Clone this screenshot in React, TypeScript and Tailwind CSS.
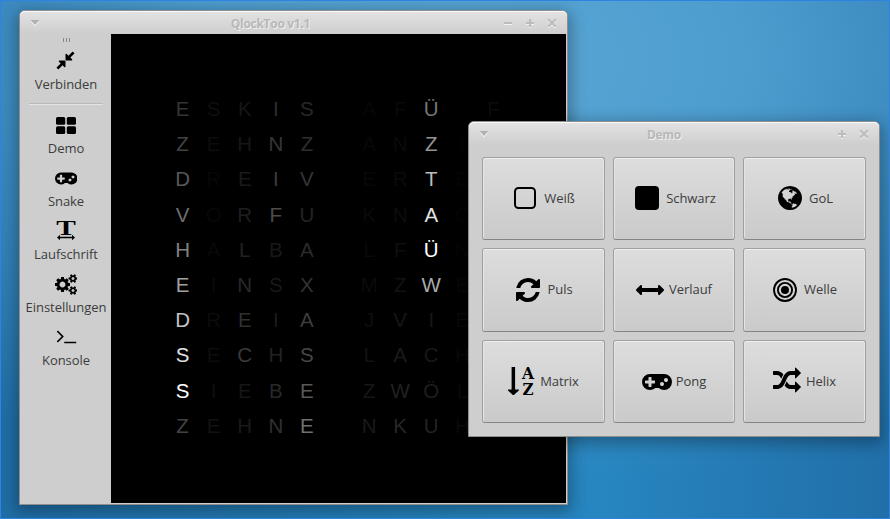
import React from "react";

const paths = {
  compress:
    "M896 960v448q0 26-19 45t-45 19-45-19l-144-144-332 332q-10 10-23 10t-23-10l-114-114q-10-10-10-23t10-23l332-332-144-144q-19-19-19-45t19-45 45-19h448q26 0 45 19t19 45zm755-672q0 13-10 23l-332 332 144 144q19 19 19 45t-19 45-45 19h-448q-26 0-45-19t-19-45v-448q0-26 19-45t45-19 45 19l144 144 332-332q10-10 23-10t23 10l114 114q10 10 10 23z",
  gamepad:
    "M832 1088v-128q0-14-9-23t-23-9h-192v-192q0-14-9-23t-23-9h-128q-14 0-23 9t-9 23v192h-192q-14 0-23 9t-9 23v128q0 14 9 23t23 9h192v192q0 14 9 23t23 9h128q14 0 23-9t9-23v-192h192q14 0 23-9t9-23zm576 64q0-53-37.5-90.5t-90.5-37.5-90.5 37.5-37.5 90.5 37.5 90.5 90.5 37.5 90.5-37.5 37.5-90.5zm256-256q0-53-37.5-90.5t-90.5-37.5-90.5 37.5-37.5 90.5 37.5 90.5 90.5 37.5 90.5-37.5 37.5-90.5zm256 128q0 212-150 362t-362 150q-192 0-338-128h-220q-146 128-338 128-212 0-362-150t-150-362 150-362 362-150h896q212 0 362 150t150 362z",
  refresh:
    "M1639 1056q0 5-1 7-64 268-268 434.5t-478 166.5q-146 0-282.5-55t-243.5-157l-129 129q-19 19-45 19t-45-19-19-45v-448q0-26 19-45t45-19h448q26 0 45 19t19 45-19 45l-137 137q71 66 161 102t187 36q134 0 250-65t186-179q11-17 53-117 8-23 30-23h192q13 0 22.5 9.5t9.5 22.5zm25-800v448q0 26-19 45t-45 19h-448q-26 0-45-19t-19-45 19-45l138-138q-148-137-349-137-134 0-250 65t-186 179q-11 17-53 117-8 23-30 23h-199q-13 0-22.5-9.5t-9.5-22.5v-7q65-268 270-434.5t480-166.5q146 0 284 55.5t245 156.5l130-129q19-19 45-19t45 19 19 45z",
  random:
    "M666 481q-60 92-137 273-22-45-37-72.5t-40.5-63.5-51-56.5-63-35-81.5-14.5h-224q-14 0-23-9t-9-23v-192q0-14 9-23t23-9h224q250 0 410 225zm1126 799q0 14-9 23l-320 320q-9 9-23 9-13 0-22.5-9.5t-9.5-22.5v-192q-32 0-85 .5t-81 1-73-1-71-5-64-10.5-63-18.5-58-28.5-59-40-55-53.5-56-69.5q59-93 136-273 22 45 37 72.5t40.5 63.5 51 56.5 63 35 81.5 14.5h256v-192q0-14 9-23t23-9q12 0 24 10l319 319q9 9 9 23zm0-896q0 14-9 23l-320 320q-9 9-23 9-13 0-22.5-9.5t-9.5-22.5v-192h-256q-48 0-87 15t-69 45-51 61.5-45 77.5q-32 62-78 171-29 66-49.5 111t-54 105-64 100-74 83-90 68.5-106.5 42-128 16.5h-224q-14 0-23-9t-9-23v-192q0-14 9-23t23-9h224q48 0 87-15t69-45 51-61.5 45-77.5q32-62 78-171 29-66 49.5-111t54-105 64-100 74-83 90-68.5 106.5-42 128-16.5h256v-192q0-14 9-23t23-9q12 0 24 10l319 319q9 9 9 23z",
  arrows:
    "M1792 896q0 26-19 45l-256 256q-19 19-45 19t-45-19-19-45v-128h-1024v128q0 26-19 45t-45 19-45-19l-256-256q-19-19-19-45t19-45 256-256q19-19 45-19t45 19 19 45v128h1024v-128q0-26 19-45t45-19 45 19l256 256q19 19 19 45z",
  terminal:
    "M649 983l-466 466q-10 10-23 10t-23-10l-50-50q-10-10-10-23t10-23l393-393-393-393q-10-10-10-23t10-23l50-50q10-10 23-10t23 10l466 466q10 10 10 23t-10 23zm1079 457v64q0 14-9 23t-23 9h-960q-14 0-23-9t-9-23v-64q0-14 9-23t23-9h960q14 0 23 9t9 23z",
  bigCog:
    "M896 896q0-106-75-181t-181-75-181 75-75 181 75 181 181 75 181-75 75-181zm384-91v185q0 10-7 19.5t-16 10.5l-155 24q-11 35-32 76 34 48 90 115 7 11 7 20 0 12-7 19-23 30-82.5 89.5t-78.5 59.5q-11 0-21-7l-115-90q-37 19-77 31-11 108-23 155-7 24-30 24h-186q-11 0-20-7.5t-10-17.5l-23-153q-34-10-75-31l-118 89q-7 7-20 7-11 0-21-8-144-133-144-160 0-9 7-19 10-14 41-53t47-61q-23-44-35-82l-152-24q-10-1-17-9.5t-7-19.5v-185q0-10 7-19.5t16-10.5l155-24q11-35 32-76-34-48-90-115-7-11-7-20 0-12 7-20 22-30 82-89t79-59q11 0 21 7l115 90q34-18 77-32 11-108 23-154 7-24 30-24h186q11 0 20 7.5t10 17.5l23 153q34 10 75 31l118-89q8-7 20-7 11 0 21 8 144 133 144 160 0 8-7 19-12 16-42 54t-45 60q23 48 34 82l152 23q10 2 17 10.5t7 19.5z",
  smallCog:
    "M1664 1408q0-52-38-90t-90-38-90 38-38 90q0 53 37.5 90.5t90.5 37.5 90.5-37.5 37.5-90.5zm256-70v140q0 16-149 31-12 27-30 52 51 113 51 138 0 4-4 7-122 71-124 71-8 0-46-47t-52-68q-20 2-30 2t-30-2q-14 21-52 68t-46 47q-2 0-124-71-4-3-4-7 0-25 51-138-18-25-30-52-149-15-149-31v-140q0-16 149-31 13-29 30-52-51-113-51-138 0-4 4-7 4-2 35-20t59-34 30-16q8 0 46 46.5t52 67.5q20-2 30-2t30 2q51-71 92-112l6-2q4 0 124 70 4 3 4 7 0 25-51 138 17 23 30 52 149 15 149 31z",
  globe:
    "M896 128q209 0 385.5 103t279.5 279.5 103 385.5-103 385.5-279.5 279.5-385.5 103-385.5-103-279.5-279.5-103-385.5 103-385.5 279.5-279.5 385.5-103zm274 521q-2 1-9.5 9.5t-13.5 9.5q2 0 4.5-5t5-11 3.5-7q6-7 22-15 14-6 52-12 34-8 51 11-2-2 9.5-13t14.5-12q3-2 15-4.5t15-7.5l2-22q-12 1-17.5-7t-6.5-21q0 2-6 8 0-7-4.5-8t-11.5 1-9 1q-10-3-15-7.5t-8-16.5-4-15q-2-5-9.5-11t-9.5-10q-1-2-2.5-5.5t-3-6.5-4-5.5-5.5-2.5-7 5-7.5 10-4.5 5q-3-2-6-1.5t-4.5 1-4.5 3-5 3.5q-3 2-8.5 3t-8.5 2q15-5-1-11-10-4-16-3 9-4 7.5-12t-8.5-14h5q-1-4-8.5-8.5t-17.5-8.5-13-6q-8-5-34-9.5t-33-.5q-5 6-4.5 10.5t4 14 3.5 12.5q1 6-5.5 13t-6.5 12q0 7 14 15.5t10 21.5q-3 8-16 16t-16 12q-5 8-1.5 18.5t10.5 16.5q2 2 1.5 4t-3.5 4.5-5.5 4-6.5 3.5l-3 2q-11 5-20.5-6t-13.5-26q-7-25-16-30-23-8-29 1-5-13-41-26-25-9-58-4 6-1 0-15-7-15-19-12 3-6 4-17.5t1-13.5q3-13 12-23 1-1 7-8.5t9.5-13.5.5-6q35 4 50-11 5-5 11.5-17t10.5-17q9-6 14-5.5t14.5 5.5 14.5 5q14 1 15.5-11t-7.5-20q12 1 3-17-4-7-8-9-12-4-27 5-8 4 2 8-1-1-9.5 10.5t-16.5 17.5-16-5q-1-1-5.5-13.5t-9.5-13.5q-8 0-16 15 3-8-11-15t-24-8q19-12-8-27-7-4-20.5-5t-19.5 4q-5 7-5.5 11.5t5 8 10.5 5.5 11.5 4 8.5 3q14 10 8 14-2 1-8.5 3.5t-11.5 4.5-6 4q-3 4 0 14t-2 14q-5-5-9-17.5t-7-16.5q7 9-25 6l-10-1q-4 0-16 2t-20.5 1-13.5-8q-4-8 0-20 1-4 4-2-4-3-11-9.5t-10-8.5q-46 15-94 41 6 1 12-1 5-2 13-6.5t10-5.5q34-14 42-7l5-5q14 16 20 25-7-4-30-1-20 6-22 12 7 12 5 18-4-3-11.5-10t-14.5-11-15-5q-16 0-22 1-146 80-235 222 7 7 12 8 4 1 5 9t2.5 11 11.5-3q9 8 3 19 1-1 44 27 19 17 21 21 3 11-10 18-1-2-9-9t-9-4q-3 5 .5 18.5t10.5 12.5q-7 0-9.5 16t-2.5 35.5-1 23.5l2 1q-3 12 5.5 34.5t21.5 19.5q-13 3 20 43 6 8 8 9 3 2 12 7.5t15 10 10 10.5q4 5 10 22.5t14 23.5q-2 6 9.5 20t10.5 23q-1 0-2.5 1t-2.5 1q3 7 15.5 14t15.5 13q1 3 2 10t3 11 8 2q2-20-24-62-15-25-17-29-3-5-5.5-15.5t-4.5-14.5q2 0 6 1.5t8.5 3.5 7.5 4 2 3q-3 7 2 17.5t12 18.5 17 19 12 13q6 6 14 19.5t0 13.5q9 0 20 10t17 20q5 8 8 26t5 24q2 7 8.5 13.5t12.5 9.5l16 8 13 7q5 2 18.5 10.5t21.5 11.5q10 4 16 4t14.5-2.5 13.5-3.5q15-2 29 15t21 21q36 19 55 11-2 1 .5 7.5t8 15.5 9 14.5 5.5 8.5q5 6 18 15t18 15q6-4 7-9-3 8 7 20t18 10q14-3 14-32-31 15-49-18 0-1-2.5-5.5t-4-8.5-2.5-8.5 0-7.5 5-3q9 0 10-3.5t-2-12.5-4-13q-1-8-11-20t-12-15q-5 9-16 8t-16-9q0 1-1.5 5.5t-1.5 6.5q-13 0-15-1 1-3 2.5-17.5t3.5-22.5q1-4 5.5-12t7.5-14.5 4-12.5-4.5-9.5-17.5-2.5q-19 1-26 20-1 3-3 10.5t-5 11.5-9 7q-7 3-24 2t-24-5q-13-8-22.5-29t-9.5-37q0-10 2.5-26.5t3-25-5.5-24.5q3-2 9-9.5t10-10.5q2-1 4.5-1.5t4.5 0 4-1.5 3-6q-1-1-4-3-3-3-4-3 7 3 28.5-1.5t27.5 1.5q15 11 22-2 0-1-2.5-9.5t-.5-13.5q5 27 29 9 3 3 15.5 5t17.5 5q3 2 7 5.5t5.5 4.5 5-.5 8.5-6.5q10 14 12 24 11 40 19 44 7 3 11 2t4.5-9.5 0-14-1.5-12.5l-1-8v-18l-1-8q-15-3-18.5-12t1.5-18.5 15-18.5q1-1 8-3.5t15.5-6.5 12.5-8q21-19 15-35 7 0 11-9-1 0-5-3t-7.5-5-4.5-2q9-5 2-16 5-3 7.5-11t7.5-10q9 12 21 2 8-8 1-16 5-7 20.5-10.5t18.5-9.5q7 2 8-2t1-12 3-12q4-5 15-9t13-5l17-11q3-4 0-4 18 2 31-11 10-11-6-20 3-6-3-9.5t-15-5.5q3-1 11.5-.5t10.5-1.5q15-10-7-16-17-5-43 12zm-163 877q206-36 351-189-3-3-12.5-4.5t-12.5-3.5q-18-7-24-8 1-7-2.5-13t-8-9-12.5-8-11-7q-2-2-7-6t-7-5.5-7.5-4.5-8.5-2-10 1l-3 1q-3 1-5.5 2.5t-5.5 3-4 3 0 2.5q-21-17-36-22-5-1-11-5.5t-10.5-7-10-1.5-11.5 7q-5 5-6 15t-2 13q-7-5 0-17.5t2-18.5q-3-6-10.5-4.5t-12 4.5-11.5 8.5-9 6.5-8.5 5.5-8.5 7.5q-3 4-6 12t-5 11q-2-4-11.5-6.5t-9.5-5.5q2 10 4 35t5 38q7 31-12 48-27 25-29 40-4 22 12 26 0 7-8 20.5t-7 21.5q0 6 2 16z",
};

const Glyph = ({ d, vb, className }: { d: string; vb: string; className: string }) => (
  <svg viewBox={vb} className={className} fill="#000">
    <path d={d} />
  </svg>
);

const sidebarItems = [
  {
    label: "Demo",
    icon: (
      <svg viewBox="0 0 20 17" className="h-[17px] w-5">
        <rect x="0" y="0" width="9.2" height="7.8" rx="1.5" />
        <rect x="10.8" y="0" width="9.2" height="7.8" rx="1.5" />
        <rect x="0" y="9.2" width="9.2" height="7.8" rx="1.5" />
        <rect x="10.8" y="9.2" width="9.2" height="7.8" rx="1.5" />
      </svg>
    ),
  },
  { label: "Snake", icon: <Glyph d={paths.gamepad} vb="0 128 1920 1792" className="h-[21px] w-[22.5px]" /> },
  {
    label: "Laufschrift",
    icon: (
      <svg viewBox="0 0 18 20" className="h-5 w-[18px] overflow-visible font-['Liberation_Serif',serif] text-[20px] font-bold">
        <text x="-0.8" y="13.5" textLength="19.6" lengthAdjust="spacingAndGlyphs">T</text>
        <path d="M0 16.5L3 13.8V15.7H15V13.8L18 16.5L15 19.2V17.3H3V19.2Z" />
      </svg>
    ),
  },
  {
    label: "Einstellungen",
    icon: (
      <svg viewBox="0 0 1920 1792" className="h-[21px] w-[22.5px]">
        <path d={paths.bigCog} />
        <path d={paths.smallCog} />
        <path d={paths.smallCog} transform="translate(0 -1024)" />
      </svg>
    ),
  },
  { label: "Konsole", icon: <Glyph d={paths.terminal} vb="0 150 1792 1792" className="h-[21px] w-[21px]" /> },
];

const demoButtons = [
  {
    label: "Weiß",
    spacing: "gap-2 pl-[2px]",
    icon: (
      <svg viewBox="0 0 22 22" className="mb-px size-[22px]">
        <rect x="1" y="1" width="20" height="20" rx="3.5" fill="none" stroke="#000" strokeWidth="2" />
      </svg>
    ),
  },
  { label: "Schwarz", spacing: "gap-[7px] pl-[3px]", icon: <div className="mb-px size-6 rounded-[4px] bg-black" /> },
  { label: "GoL", spacing: "gap-[7px] pl-[2px]", icon: <Glyph d={paths.globe} vb="128 128 1536 1536" className="mb-px size-6" /> },
  { label: "Puls", spacing: "gap-[7px] pl-[2px]", icon: <Glyph d={paths.refresh} vb="128 128 1536 1536" className="size-6" /> },
  { label: "Verlauf", spacing: "gap-[5px]", icon: <Glyph d={paths.arrows} vb="0 0 1792 1792" className="size-7" /> },
  {
    label: "Welle",
    spacing: "gap-[7px] pl-px",
    icon: (
      <svg viewBox="0 0 24 24" className="size-6" fill="none" stroke="#000" strokeWidth="1.9">
        <circle cx="12" cy="12" r="11" />
        <circle cx="12" cy="12" r="7.1" />
        <circle cx="12" cy="12" r="4" fill="#000" stroke="none" />
      </svg>
    ),
  },
  {
    label: "Matrix",
    spacing: "gap-[6px]",
    icon: (
      <svg viewBox="0 0 26 28" className="mb-px h-7 w-[26px] overflow-visible font-['DejaVu_Serif',serif] text-[16px] font-bold">
        <path d="M3.6 0H7.1V22.5H10.6Q11.3 22.7 10.8 23.4L5.9 28H4.9L0 23.4Q-.5 22.7.3 22.5H3.6Z" />
        <text x="13.9" y="12" textLength="12" lengthAdjust="spacingAndGlyphs">A</text>
        <text x="14.4" y="28" textLength="11" lengthAdjust="spacingAndGlyphs">Z</text>
      </svg>
    ),
  },
  { label: "Pong", spacing: "gap-[4px]", icon: <Glyph d={paths.gamepad} vb="0 128 1920 1792" className="h-7 w-[30px]" /> },
  { label: "Helix", spacing: "gap-[5px]", icon: <Glyph d={paths.random} vb="0 0 1792 1792" className="mb-px size-7" /> },
];

const letterRows = [
  "ESKISTAFÜNF",
  "ZEHNZWANZIG",
  "DREIVIERTEL",
  "VORFUNKNACH",
  "HALBAELFÜNF",
  "EINSXÄMZWEI",
  "DREIAUJVIER",
  "SECHSNLACHT",
  "SIEBENZWÖLF",
  "ZEHNEUNKUHR",
];

// Brightness of each LED, one value per letter.
const levels = [
  [52, 14, 22, 46, 40, 0, 6, 9, 118, 0, 12],
  [66, 12, 22, 54, 46, 0, 7, 10, 148, 5, 0],
  [88, 7, 26, 60, 52, 0, 8, 11, 190, 5, 0],
  [108, 7, 30, 76, 36, 0, 9, 12, 225, 5, 0],
  [130, 8, 34, 24, 42, 0, 10, 14, 255, 6, 0],
  [160, 10, 40, 24, 50, 0, 11, 18, 170, 7, 0],
  [195, 11, 48, 28, 60, 0, 14, 22, 22, 8, 0],
  [225, 13, 58, 34, 70, 0, 18, 26, 24, 9, 0],
  [255, 15, 22, 40, 88, 0, 22, 32, 30, 10, 0],
  [66, 18, 26, 48, 112, 0, 26, 38, 35, 12, 0],
];

const MenuArrow = () => (
  <svg viewBox="0 0 10 7" className="mt-[2px] h-[7px] w-[10px]">
    <path d="M.5 1H9.5L5 6.5Z" fill="#f4f4f4" />
    <path d="M.5 0H9.5L5 5Z" fill="#b2b2b2" />
  </svg>
);

const WindowMark = ({ d }: { d: string }) => (
  <svg viewBox="0 0 10 10" className="size-[10px]" fill="none" strokeWidth="2">
    <path d={d} stroke="#f2f2f2" transform="translate(0 1)" />
    <path d={d} stroke="#bcbcbc" />
  </svg>
);

const TitleBar = ({ title, marks, label }: { title: string; marks: string[]; label: string }) => (
  <div className="grid h-[23px] shrink-0 grid-cols-[1fr_auto_1fr] items-center rounded-t-[5px] bg-linear-to-b from-[#e3e3e3] to-[#cecece] pr-[10px] pl-[10px] shadow-[inset_0_1px_0_#fafafa]">
    <MenuArrow />
    <div className={`pt-[2px] text-[12px] leading-4 font-bold tracking-[-0.3px] text-[#b8b8b8] [text-shadow:1px_1px_0_#efefef] ${label}`}>{title}</div>
    <div className="flex items-center justify-end gap-3">
      {marks.map((d) => (
        <WindowMark key={d} d={d} />
      ))}
    </div>
  </div>
);

const MINUS = "M1 5H9";
const PLUS = "M1 5H9M5 1V9";
const CLOSE = "M1.2 1.2L8.8 8.8M8.8 1.2L1.2 8.8";

export default function App() {
  return (
    <div className="relative h-[519px] w-[890px] overflow-hidden bg-[radial-gradient(ellipse_820px_430px_at_460px_60px,#5ba6d4_0%,#53a2d3dd_35%,#4a98cb99_60%,transparent_100%),linear-gradient(90deg,#1f6da5_0%,#2584bd_55%,#2785bf_68%,#216fa9_100%)] font-['Open_Sans','Noto_Sans',sans-serif] text-[13px] text-[#3c3c3c]">
      <main className="absolute top-[10px] left-[19px] flex h-[495px] w-[549px] flex-col rounded-t-[6px] border border-[#8e8e8e] bg-[#cecece] shadow-[0_4px_15px_3px_rgba(0,0,0,0.3)]">
        <TitleBar title="QlockToo v1.1" marks={[MINUS, PLUS, CLOSE]} label="translate-x-[-23px]" />
        <div className="flex h-[469px]">
          <nav className="flex w-[91px] shrink-0 flex-col items-center pl-px">
            <div className="mt-[4px] flex h-1 gap-[2px]">
              <i className="w-px bg-[#888]" />
              <i className="w-px bg-[#888]" />
              <i className="w-px bg-[#888]" />
            </div>
            <div className="mt-[8px] flex h-[53px] flex-col items-center">
              <div className="flex h-[21px] items-center">
                <Glyph d={paths.compress} vb="0 0 1792 1792" className="size-[21px]" />
              </div>
              <div className="mt-[4px] leading-[18px] tracking-[-0.05px]">Verbinden</div>
            </div>
            <div className="h-[2px] w-[74px] border-t border-b border-t-[#b9b9b9] border-b-[#e4e4e4]" />
            <div className="mt-[9px] flex flex-col">
              {sidebarItems.map((item) => (
                <div key={item.label} className="flex h-[53px] flex-col items-center">
                  <div className="flex h-[22px] items-center">{item.icon}</div>
                  <div className="mt-[3px] leading-[18px] tracking-[-0.05px]">{item.label}</div>
                </div>
              ))}
            </div>
          </nav>
          <section className="h-[469px] w-[455px] bg-black pt-[57px] pl-[56px] font-['Liberation_Sans',Arial,sans-serif] text-[20.5px]">
            <div className="grid w-[342px] auto-rows-[35.2px] grid-cols-11">
              {letterRows.flatMap((row, r) =>
                row.split("").map((ch, c) => (
                  <div
                    key={`${r}-${c}`}
                    className="text-center leading-[35px]"
                    style={{ color: `rgb(${levels[r][c]},${levels[r][c]},${levels[r][c]})` }}
                  >
                    {ch}
                  </div>
                )),
              )}
            </div>
          </section>
        </div>
      </main>

      <section className="absolute top-[121px] left-[468px] flex h-[316px] w-[412px] flex-col rounded-t-[6px] border border-[#8e8e8e] bg-[#cecece] shadow-[0_4px_15px_3px_rgba(0,0,0,0.3)]">
        <TitleBar title="Demo" marks={[PLUS, CLOSE]} label="translate-x-[-10px]" />
        <div className="mt-3 ml-[13px] grid grid-cols-[123px_122px_123px] grid-rows-[83px_84px_83px] gap-2">
          {demoButtons.map((b) => (
            <button
              key={b.label}
              className={`flex items-center justify-center rounded-[3px] border border-[#a0a0a0] border-b-[#858585] bg-linear-to-b from-[#dddddd] to-[#cacaca] tracking-[-0.05px] shadow-[inset_0_1px_0_#f0f0f0,inset_1px_0_0_#e4e4e4,inset_-1px_0_0_#e4e4e4] ${b.spacing}`}
            >
              {b.icon}
              <span>{b.label}</span>
            </button>
          ))}
        </div>
      </section>
      <div className="pointer-events-none absolute inset-0 border border-[#2e83e2]" />
    </div>
  );
}
